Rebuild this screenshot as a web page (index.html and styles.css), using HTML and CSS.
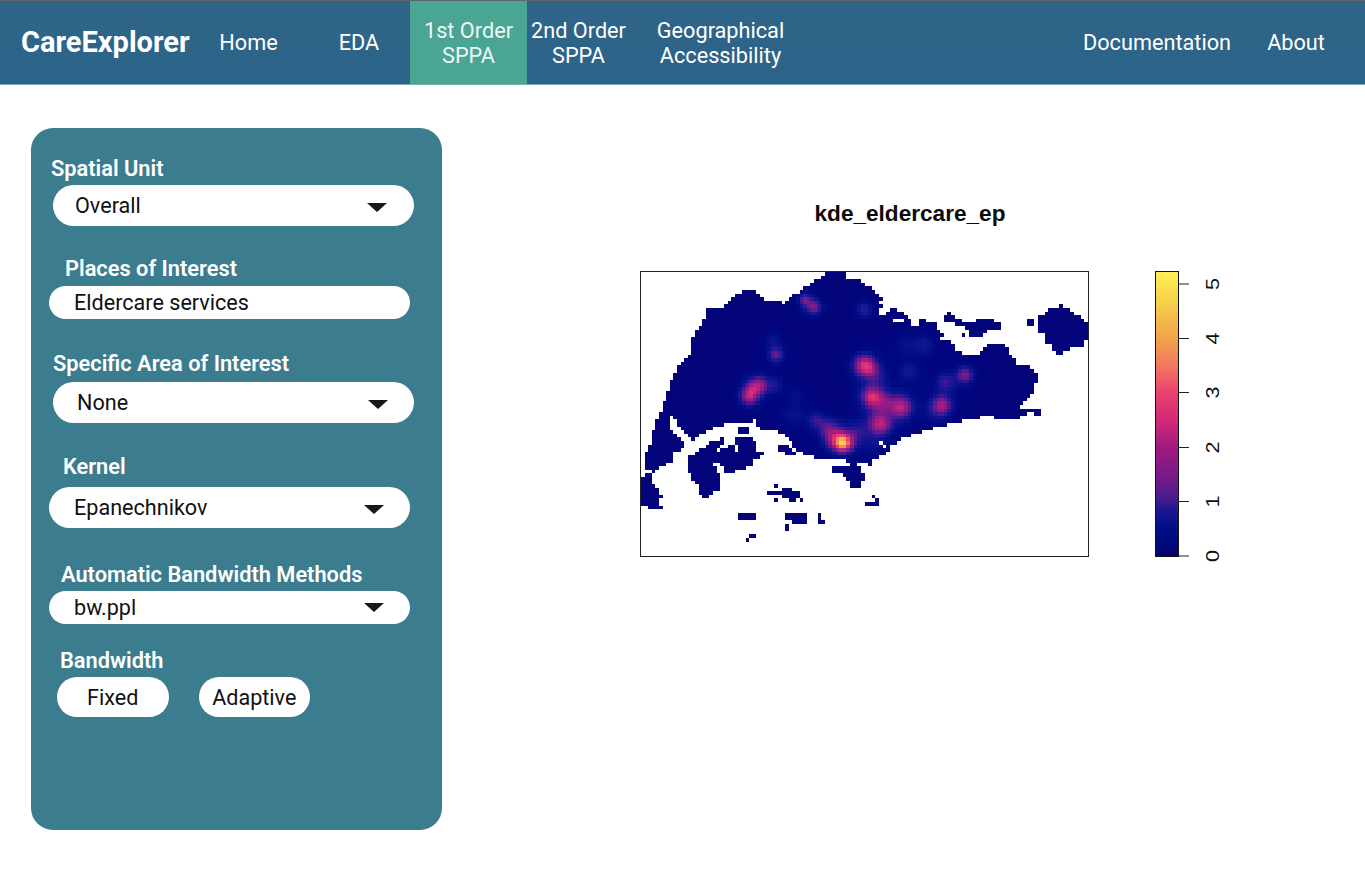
FILE: index.html
```html
<!DOCTYPE html>
<html lang="en">
<head>
<meta charset="utf-8">
<title>CareExplorer</title>
<link rel="stylesheet" href="styles.css">
</head>
<body>
<header class="topbar">
  <a class="brand">CareExplorer</a>
  <nav class="nav">
    <a class="nav-item w-home">Home</a>
    <a class="nav-item w-eda">EDA</a>
    <a class="nav-item w-first active">1st Order<br>SPPA</a>
    <a class="nav-item w-second">2nd Order<br>SPPA</a>
    <a class="nav-item w-geo">Geographical<br>Accessibility</a>
  </nav>
  <nav class="nav nav-right">
    <a class="nav-item w-doc">Documentation</a>
    <a class="nav-item w-about">About</a>
  </nav>
</header>
<main class="content">
  <aside class="panel">
    <div class="field f-spatial">
      <div class="label">Spatial Unit</div>
      <div class="pill tall">Overall<span class="caret"></span></div>
    </div>
    <div class="field f-places">
      <div class="label">Places of Interest</div>
      <div class="pill short">Eldercare services</div>
    </div>
    <div class="field f-area">
      <div class="label">Specific Area of Interest</div>
      <div class="pill tall">None<span class="caret"></span></div>
    </div>
    <div class="field f-kernel">
      <div class="label">Kernel</div>
      <div class="pill tall">Epanechnikov<span class="caret"></span></div>
    </div>
    <div class="field f-auto">
      <div class="label">Automatic Bandwidth Methods</div>
      <div class="pill short">bw.ppl<span class="caret"></span></div>
    </div>
    <div class="field f-band">
      <div class="label">Bandwidth</div>
      <div class="choices">
        <button class="choice">Fixed</button>
        <button class="choice">Adaptive</button>
      </div>
    </div>
  </aside>
  <section class="plot">
    <h2 class="plot-title">kde_eldercare_ep</h2>
    <div class="plot-row">
      <div class="map-frame"><canvas id="map" class="map" width="124" height="79"></canvas></div>
      <svg class="legend" width="70" height="287" viewBox="0 0 70 287">
        <line x1="23" x2="35" y1="13" y2="13"/>
        <line x1="23" x2="35" y1="67.5" y2="67.5"/>
        <line x1="23" x2="35" y1="121.5" y2="121.5"/>
        <line x1="23" x2="35" y1="176.5" y2="176.5"/>
        <line x1="23" x2="35" y1="230.5" y2="230.5"/>
        <line x1="23" x2="35" y1="285" y2="285"/>
        <text transform="translate(65 13) rotate(-90) scale(1.2 1)">5</text>
        <text transform="translate(65 67.5) rotate(-90) scale(1.2 1)">4</text>
        <text transform="translate(65 121.5) rotate(-90) scale(1.2 1)">3</text>
        <text transform="translate(65 176.5) rotate(-90) scale(1.2 1)">2</text>
        <text transform="translate(65 230.5) rotate(-90) scale(1.2 1)">1</text>
        <text transform="translate(65 285) rotate(-90) scale(1.2 1)">0</text>
      </svg>
      <div class="scale"></div>
    </div>
  </section>
</main>
<script src="map.js"></script>
</body>
</html>
```
FILE: styles.css
```css
* { box-sizing: border-box; }
html, body { margin: 0; padding: 0; }
body {
  background: #fff;
  font-family: Roboto, "Liberation Sans", sans-serif;
  height: 883px;
  overflow: hidden;
}
.topbar {
  display: flex;
  align-items: stretch;
  height: 85px;
  background: linear-gradient(#2e6587, #2c6389);
  border-top: 1px solid #5d666d;
  border-bottom: 1px solid #7fb1bd;
  color: #fff;
  padding-left: 21px;
}
.brand {
  display: flex;
  align-items: center;
  width: 168px;
  font-size: 29px;
  font-weight: 700;
  white-space: nowrap;
  padding-bottom: 2px;
}
.nav { display: flex; align-items: stretch; }
.nav-right { margin-left: auto; padding-right: 22px; }
.nav-item {
  display: flex;
  align-items: center;
  justify-content: center;
  text-align: center;
  font-size: 21.7px;
  line-height: 25px;
  font-weight: 400;
  white-space: nowrap;
}
.w-home { width: 119px; }
.w-eda { width: 102px; }
.w-first { width: 117px; }
.w-second { width: 103px; }
.w-geo { width: 181px; }
.w-doc { width: 184px; }
.w-about { width: 94px; }
.active { background: #4aa595; color: #eef8f5; }

.content { display: flex; align-items: flex-start; padding: 43px 0 0 31px; }
.panel {
  display: flex;
  flex-direction: column;
  width: 411px;
  height: 702px;
  background: #3b7d8f;
  border-radius: 22px;
  padding-top: 28px;
  flex: none;
}
.label {
  color: #fff;
  font-size: 21.8px;
  font-weight: 600;
  height: 24px;
  line-height: 26px;
  white-space: nowrap;
}
.pill {
  display: flex;
  align-items: center;
  justify-content: space-between;
  width: 361px;
  background: #fff;
  color: #111;
  font-size: 21.6px;
}
.tall { height: 41px; border-radius: 21px; }
.short { height: 33px; border-radius: 17px; }
.caret {
  width: 0;
  height: 0;
  border-left: 10.5px solid transparent;
  border-right: 10.5px solid transparent;
  border-top: 9px solid #17171c;
  margin-top: 3px;
}

.f-spatial .label { margin-left: 20px; }
.f-spatial .pill { margin: 5px 0 0 21.5px; padding: 0 27px 0 22.5px; }
.f-places { margin-top: 30px; }
.f-places .label { margin-left: 34px; }
.f-places .pill { margin: 6px 0 0 18px; padding: 0 27px 0 25px; }
.f-area { margin-top: 32px; }
.f-area .label { margin-left: 22px; }
.f-area .pill { margin: 7px 0 0 21.5px; padding: 0 26px 0 24.5px; }
.f-kernel { margin-top: 31px; }
.f-kernel .label { margin-left: 32px; }
.f-kernel .pill { margin: 9px 0 0 18px; padding: 0 26px 0 25px; }
.f-auto { margin-top: 34px; }
.f-auto .label { margin-left: 30px; }
.f-auto .pill { margin: 5px 0 0 18px; padding: 0 26px 0 25px; }
.f-auto .caret { margin-top: 0; }
.f-band { margin-top: 24px; }
.f-band .label { margin-left: 29px; }
.choices { display: flex; gap: 30px; margin: 5px 0 0 26px; }
.choice {
  width: 111.5px;
  height: 40px;
  border: 0;
  border-radius: 20px;
  background: #fff;
  color: #111;
  font-family: inherit;
  font-size: 21.6px;
  padding: 0;
}

.plot { margin-left: 198px; }
.plot-title {
  width: 540px;
  margin: 0;
  padding-top: 72px;
  height: 143px;
  text-align: center;
  font-family: "Liberation Sans", Arial, sans-serif;
  font-size: 22.6px;
  font-weight: 700;
  line-height: 28px;
  color: #0b0b0b;
}
.plot-row { display: flex; position: relative; }
.map-frame {
  width: 449px;
  height: 286px;
  border: 1px solid #222;
  flex: none;
}
.map {
  display: block;
  width: 447px;
  height: 284px;
  image-rendering: pixelated;
  filter: blur(0.35px);
}
.scale {
  position: absolute;
  left: 515px;
  top: 0;
  width: 24px;
  height: 286px;
  border: 1px solid #111;
  background: linear-gradient(to top,
    #03036e 0%, #00108a 10%, #1a1790 16%, #3f1a8f 19.2%, #6f1a8a 26%,
    #a11a80 38.3%, #cf2878 47%, #ec406f 57.5%, #f0785e 67%, #f2a24a 76.7%,
    #f6cb4c 88%, #fff051 100%);
}
.legend { overflow: visible; flex: none; margin-left: 65px; }
.legend line { stroke: #222; stroke-width: 1; }
.legend text {
  font-family: "Liberation Sans", Arial, sans-serif;
  font-size: 18px;
  text-anchor: middle;
  fill: #111;
}
```
FILE: map.js
```js
(function () {
  var X0 = 641, Y0 = 272, W = 447, H = 284, NX = 124, NY = 79;
  var land = [
    [662,407,667,397,670,383,673,377,680,365,690,353,694,332,702,325,705,315,708,309,723,307,733,296,747,290,760,293,764,301,785,303,793,295,812,283,827,273,843,271,847,277,860,281,870,287,877,293,883,297,880,303,883,304,877,313,883,315,893,308,903,313,913,322,927,318,928,325,935,323,940,332,945,335,940,338,950,342,957,350,963,354,977,354,985,346,993,343,1007,346,1013,358,1020,362,1015,365,1033,368,1037,375,1043,375,1043,377,1037,377,1035,385,1030,398,1017,408,1040,407,1040,416,1030,413,1020,417,1015,421,1005,420,995,418,992,414,977,418,957,422,935,428,905,437,890,447,885,455,877,458,872,458,872,467,863,462,852,462,837,458,822,460,800,452,795,448,783,433,767,430,757,427,757,418,752,423,727,423,703,433,693,440,685,433,672,417,663,413],
    [660,411,669,417,670,427,683,442,683,449,673,452,672,462,662,467,653,472,645,470,645,453,650,443,653,432,657,422],
    [640,477,652,472,653,482,658,490,662,497,659,505,662,509,653,509,642,505,640,505],
    [687,458,697,452,715,440,725,438,725,443,715,452,732,445,738,452,738,447,733,438,753,438,758,450,767,455,755,458,750,467,745,468,740,470,727,475,723,465,715,462,712,463,722,477,722,487,710,497,707,501,702,498,697,485,688,470],
    [778,445,783,443,797,453,793,458,778,450],
    [740,425,750,425,750,432,740,432],
    [830,467,843,468,852,463,862,465,862,472,864,478,860,487,852,487,843,475,832,473],
    [767,490,778,490,778,494,767,494],
    [773,485,778,485,778,487,773,487],
    [778,492,787,486,798,493,798,500,788,501],
    [798,497,803,497,803,501,798,501],
    [774,498,778,498,778,501,774,501],
    [737,517,743,512,753,512,757,517,757,521,740,521],
    [747,537,750,533,757,533,757,538,750,538,750,541,747,541],
    [785,514,806,514,806,522,803,525,795,525,793,522,785,521],
    [785,523,788,523,788,526,785,526],
    [785,527,788,527,788,530,785,530],
    [817,514,820,514,824,520,824,523,820,523,817,518],
    [852,507,855,507,855,510,852,510],
    [865,503,870,503,870,507,865,507],
    [873,494,876,494,876,497,873,497],
    [865,504,875,502,877,498,883,502,883,503,875,505,868,507,865,507],
    [943,315,948,312,953,315,963,322,982,320,1002,321,1002,329,987,330,983,335,972,338,967,328,957,327,952,322,943,320],
    [963,334,967,334,967,338,963,338],
    [1027,317,1033,317,1033,325,1027,325],
    [1037,315,1047,313,1048,309,1070,309,1087,323,1086,346,1075,346,1060,355,1055,352,1050,343,1044,343,1044,334,1037,333],
    [1058,305,1062,305,1062,307,1058,307]
  ];
  var holes = [
    [893,318,905,318,905,323,893,323],
    [881,440,884,446,889,447,886,450,880,444],
    [728,423,732,423,732,427,726,427],
    [913,322,917,322,917,326,913,326]
  ];
  var spots = [
    [843,443,3.3,5.5], [835,438,1.2,6.5], [850,438,.5,7],
    [872,397,1.9,6.5], [884,403,.8,6.5], [864,365,1.8,6.5], [870,369,.8,5.5],
    [901,407,1.7,7], [880,424,1.7,7], [942,405,1.4,6], [965,375,1.2,5.5],
    [945,382,.7,6.5], [752,390,1,5.5], [759,385,1.2,5.5], [749,397,1.3,5.5],
    [776,355,1,5], [773,340,.4,6], [805,300,1,4.5], [814,307,1.1,5],
    [864,310,.7,5.5], [909,372,.5,7], [905,345,.35,8], [925,345,.5,7],
    [793,415,.4,8], [816,420,.6,5.5], [775,385,.45,6], [797,395,.3,6],
    [828,428,.7,6.5], [935,412,.35,8], [877,378,.35,7], [860,430,.35,6], [873,445,.3,7]
  ];
  var stops = [
    [0,3,3,122],[.3,0,10,130],[.6,15,20,145],[.85,40,24,150],[1,70,26,145],[1.4,120,26,138],
    [2,170,30,128],[2.5,215,45,120],[3,236,64,111],[3.5,240,120,94],[4,242,162,74],
    [4.6,246,203,76],[5.22,255,240,81]
  ];
  function inside(p, x, y) {
    var c = false;
    for (var i = 0, j = p.length - 2; i < p.length; j = i, i += 2) {
      if ((p[i + 1] > y) !== (p[j + 1] > y) &&
          x < (p[j] - p[i]) * (y - p[i + 1]) / (p[j + 1] - p[i + 1]) + p[i]) c = !c;
    }
    return c;
  }
  function colour(v) {
    if (v >= 5.22) v = 5.22;
    for (var i = 1; i < stops.length; i++) {
      if (v <= stops[i][0]) {
        var a = stops[i - 1], b = stops[i], t = (v - a[0]) / (b[0] - a[0]);
        return [a[1] + (b[1] - a[1]) * t, a[2] + (b[2] - a[2]) * t, a[3] + (b[3] - a[3]) * t];
      }
    }
    return stops[0].slice(1);
  }
  var cv = document.getElementById('map');
  var ctx = cv.getContext('2d');
  var img = ctx.createImageData(NX, NY);
  for (var r = 0; r < NY; r++) {
    for (var q = 0; q < NX; q++) {
      var x = X0 + (q + .5) * W / NX, y = Y0 + (r + .5) * H / NY;
      var on = land.some(function (p) { return inside(p, x, y); }) &&
               !holes.some(function (p) { return inside(p, x, y); });
      var k = (r * NX + q) * 4;
      if (!on) { img.data[k] = img.data[k + 1] = img.data[k + 2] = 255; img.data[k + 3] = 255; continue; }
      var v = 0;
      spots.forEach(function (s) {
        var dx = x - s[0], dy = y - s[1], d = dx * dx + dy * dy;
        v += s[2] * Math.exp(-d / (2 * s[3] * s[3]));
        v += Math.min(s[2], 2) * 0.22 * Math.exp(-d / (2 * 4 * s[3] * s[3]));
      });
      var c = colour(v);
      img.data[k] = c[0]; img.data[k + 1] = c[1]; img.data[k + 2] = c[2]; img.data[k + 3] = 255;
    }
  }
  ctx.putImageData(img, 0, 0);
})();
```
